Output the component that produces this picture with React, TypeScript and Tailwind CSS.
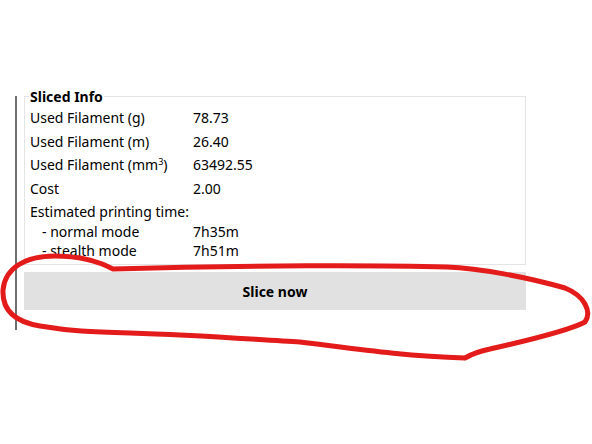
import React from 'react';

const rows: { label: React.ReactNode; value: string }[] = [
  { label: 'Used Filament (g)', value: '78.73' },
  { label: 'Used Filament (m)', value: '26.40' },
  {
    label: (
      <>
        Used Filament (mm<sup className="text-[9px] -top-[5px]">3</sup>)
      </>
    ),
    value: '63492.55',
  },
  { label: 'Cost', value: '2.00' },
];

const modes = [
  { label: '- normal mode', value: '7h35m' },
  { label: '- stealth mode', value: '7h51m' },
];

const App: React.FC = () => {
  return (
    <div
      className="relative w-[592px] h-[444px] bg-white overflow-hidden text-black"
      style={{ fontFamily: '"Noto Sans", "Open Sans", sans-serif' }}
    >
      <div className="pt-[82px] pl-[15px]">
        <div className="h-[234px] border-l-2 border-[#707070] pl-[7px]">
          {/* Sliced Info group box */}
          <div className="relative mt-[14px] w-[502px] h-[169px] border border-[#e4e4e4] px-[5px] pt-[9px]">
            <div className="absolute -top-[10px] left-[4px] bg-white px-[1px] text-[14px] font-bold leading-[20px]">
              Sliced Info
            </div>
            {rows.map((r, i) => (
              <div key={i} className="flex items-center h-[23.5px] text-[14px]">
                <span className="w-[163px]">{r.label}</span>
                <span>{r.value}</span>
              </div>
            ))}
            <div className="flex items-center h-[23.5px] text-[14px]">Estimated printing time:</div>
            <div className="-mt-[2px]">
              {modes.map((m, i) => (
                <div key={i} className="flex items-center h-[19px] text-[14px]">
                  <span className="w-[163px] pl-[12px]">{m.label}</span>
                  <span>{m.value}</span>
                </div>
              ))}
            </div>
          </div>
          <button className="mt-[7px] w-[502px] h-[38px] bg-[#e1e1e1] text-[14px] font-bold flex items-center justify-center">
            Slice now
          </button>
        </div>
      </div>

      {/* red freehand annotation */}
      <svg className="absolute left-0 top-0 pointer-events-none" width="592" height="444">
        <path
          d="M113,269 C100,262 80,256 55,256 C25,256 5,268 3,290 C2,310 15,322 40,326 C70,331 90,332 130,333 C200,335 260,340 300,342 C350,348 400,356 465,358 C470,355 475,352 490,349 C530,340 570,330 585,322 C592,312 585,296 565,288 C530,278 480,268 447,267 C380,265 250,265 113,269"
          fill="none"
          stroke="#e31b1b"
          strokeWidth="5"
          strokeLinecap="round"
          strokeLinejoin="round"
        />
      </svg>
    </div>
  );
};

export default App;
